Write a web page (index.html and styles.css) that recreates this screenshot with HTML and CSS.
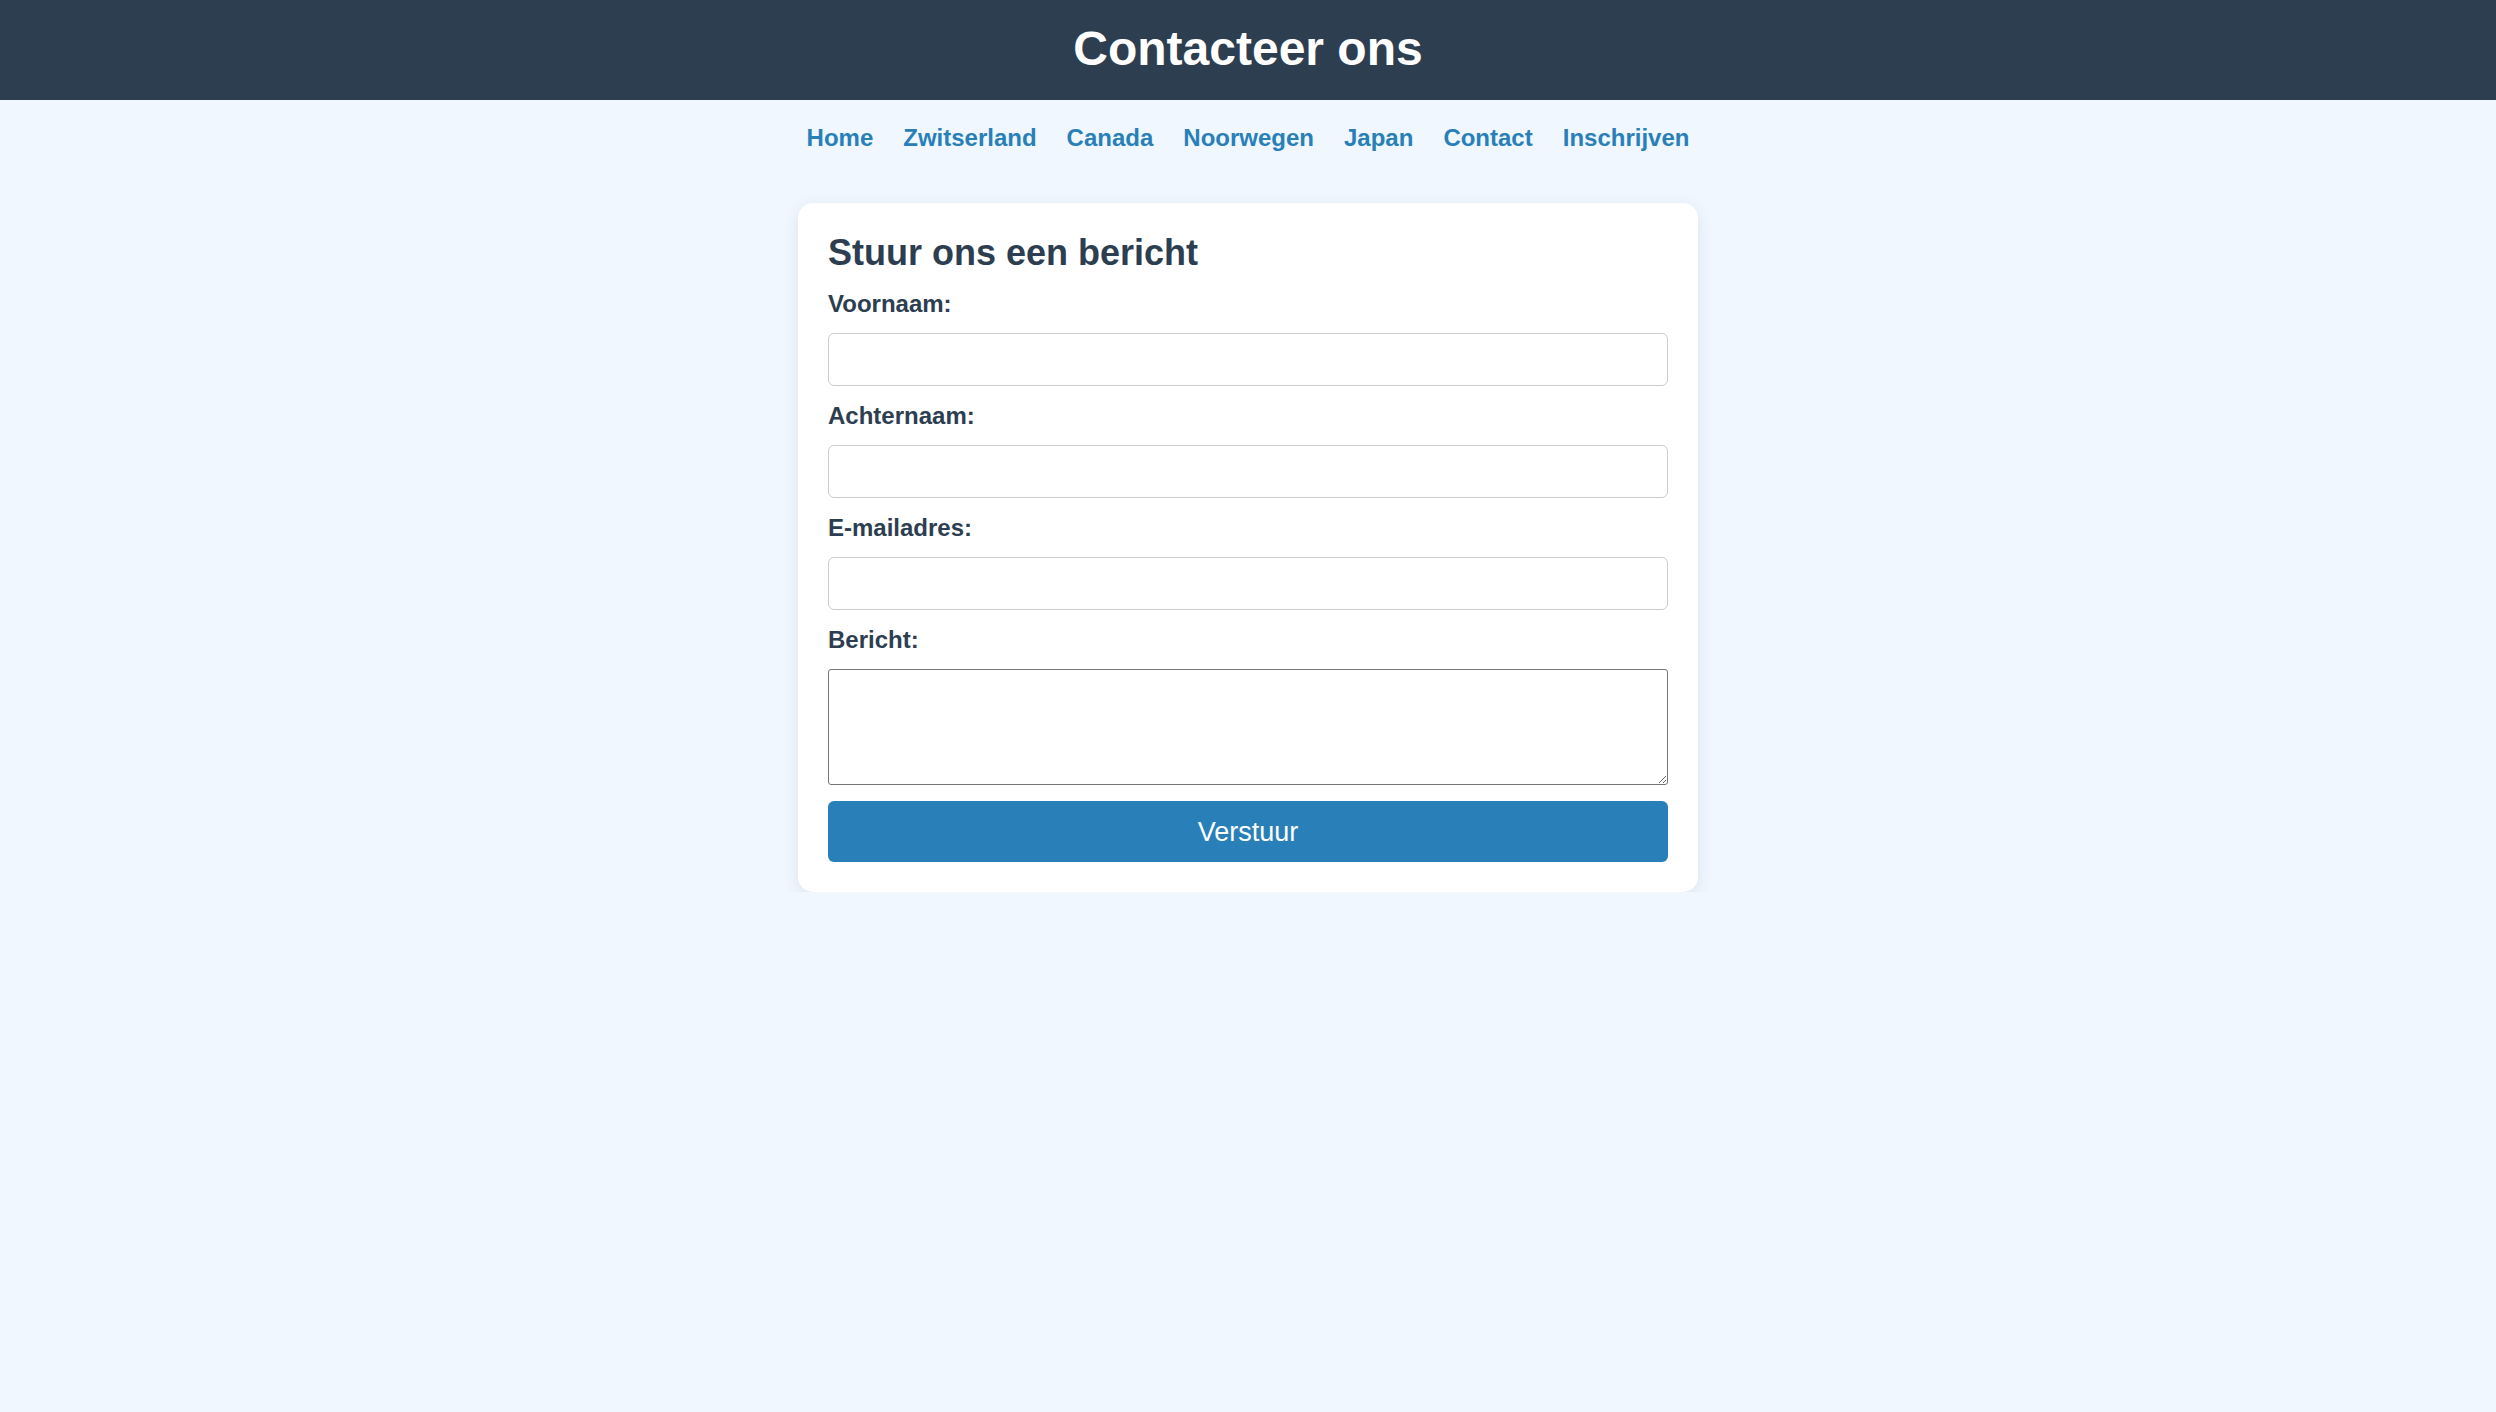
FILE: index.html
```html
<!DOCTYPE html>
<html lang="nl">
<head>
<meta charset="utf-8">
<title>Contacteer ons</title>
<link rel="stylesheet" href="styles.css">
</head>
<body>
<header class="site-header">
  <h1 class="site-title">Contacteer ons</h1>
</header>
<nav class="site-nav">
  <a href="#">Home</a>
  <a href="#">Zwitserland</a>
  <a href="#">Canada</a>
  <a href="#">Noorwegen</a>
  <a href="#">Japan</a>
  <a href="#">Contact</a>
  <a href="#">Inschrijven</a>
</nav>
<main class="main">
  <section class="card">
    <h2 class="card-title">Stuur ons een bericht</h2>
    <form class="form">
      <label class="label" for="voornaam">Voornaam:</label>
      <input class="field" type="text" id="voornaam">
      <label class="label" for="achternaam">Achternaam:</label>
      <input class="field" type="text" id="achternaam">
      <label class="label" for="email">E-mailadres:</label>
      <input class="field" type="email" id="email">
      <label class="label" for="bericht">Bericht:</label>
      <textarea class="area" id="bericht"></textarea>
      <button class="submit" type="button">Verstuur</button>
    </form>
  </section>
</main>
</body>
</html>
```
FILE: styles.css
```css
html, body {
  margin: 0;
  padding: 0;
}
body {
  background: #f0f7ff;
  font-family: "Liberation Sans", Arial, sans-serif;
  color: #2c3e50;
}
.site-header {
  background: #2c3e50;
  height: 100px;
  box-sizing: border-box;
  padding-top: 22px;
  text-align: center;
}
.site-title {
  margin: 0;
  color: #ffffff;
  font-size: 48px;
  font-weight: bold;
  line-height: 54px;
}
.site-nav {
  display: flex;
  justify-content: center;
  gap: 30px;
  padding-top: 24px;
}
.site-nav a {
  color: #2980b9;
  font-size: 24px;
  font-weight: bold;
  text-decoration: none;
  line-height: 27px;
}
.main {
  display: flex;
  justify-content: center;
  padding-top: 52px;
}
.card {
  width: 900px;
  box-sizing: border-box;
  padding: 30px;
  background: #ffffff;
  border-radius: 15px;
  box-shadow: 0 4px 16px rgba(44, 62, 80, 0.1);
}
.card-title {
  margin: 0 0 17px 0;
  font-size: 36px;
  font-weight: bold;
  color: #2c3e50;
  line-height: 40px;
}
.form {
  display: flex;
  flex-direction: column;
  gap: 16px;
}
.label {
  font-size: 24px;
  font-weight: bold;
  color: #2c3e50;
  line-height: 27px;
}
.field {
  display: block;
  width: 100%;
  height: 53px;
  box-sizing: border-box;
  margin: 0;
  padding: 0 12px;
  border: 1px solid #cccccc;
  border-radius: 6px;
  background: #ffffff;
  font-size: 24px;
  font-family: "Liberation Sans", Arial, sans-serif;
}
.area {
  display: block;
  width: 100%;
  height: 116px;
  box-sizing: border-box;
  margin: 0;
  padding: 3px;
  border: 1px solid #767676;
  border-radius: 3px;
  background: #ffffff;
  resize: both;
}
.submit {
  display: block;
  width: 100%;
  height: 61px;
  margin: 0;
  border: none;
  border-radius: 6px;
  background: #2980b9;
  color: #ffffff;
  font-size: 27px;
  line-height: 30px;
  font-family: "Liberation Sans", Arial, sans-serif;
  cursor: pointer;
}
```
